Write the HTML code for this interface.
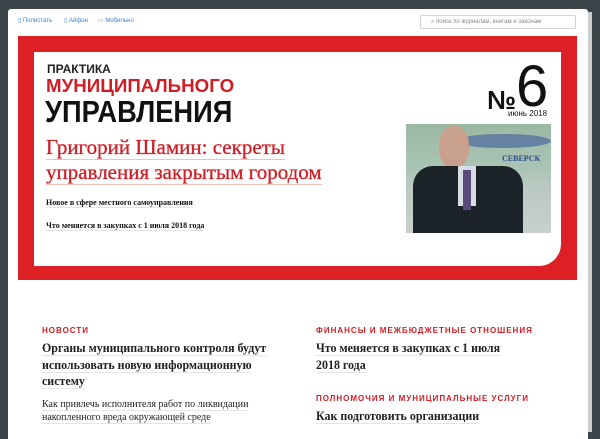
<!DOCTYPE html>
<html><head><meta charset="utf-8"><style>
*{margin:0;padding:0;box-sizing:border-box}
body{width:600px;height:427px;background:#3c454a;position:relative;overflow:hidden;font-family:"Liberation Sans",sans-serif}
.page{position:absolute;left:8px;top:9px;width:580px;height:430px;background:#fff;border-radius:3px 3px 0 0}
.edge{position:absolute;left:588px;top:12px;width:4px;height:420px;background:#c9cdd0}
.nav{position:absolute;top:17px;font-size:6px;color:#3b82d6}
.search{position:absolute;left:420px;top:15px;width:156px;height:14px;border:1px solid #cfd4d8;border-radius:2px;font-size:6px;color:#888;padding:3px 0 0 10px}
.red{position:absolute;left:18px;top:36px;width:559px;height:244px;background:#dd1f26}
.inner{position:absolute;left:34px;top:52px;width:527px;height:214px;background:#fff;border-bottom-right-radius:22px}
.t{position:absolute;white-space:nowrap}
.serif{font-family:"Liberation Serif","DejaVu Serif",serif}
.u{border-bottom:1.5px solid #e5e5e5}
.head{position:absolute;left:46px;font-family:"Liberation Serif",serif;font-size:21px;color:#d01d25;border-bottom:1.5px solid #f3c0b8;line-height:23px;white-space:nowrap;-webkit-text-stroke:0.3px #d01d25}
.sec{position:absolute;font-size:8px;letter-spacing:1px;color:#d01d25;font-weight:bold}
.art{position:absolute;font-family:"Liberation Serif",serif;font-size:13px;font-weight:bold;color:#222;line-height:16.5px;white-space:nowrap;transform:scaleX(.92);transform-origin:left top}
</style></head><body>
<div class="page"></div><div class="edge"></div>
<div class="nav" style="left:18px">▯ Полистать</div>
<div class="nav" style="left:64px">▯ Айфон</div>
<div class="nav" style="left:98px">▭ Мобильно</div>
<div class="search">⌕ поиск по журналам, книгам и законам</div>
<div class="red"></div><div class="inner"></div>
<div class="t" style="left:47px;top:62px;font-size:12px;font-weight:bold;color:#222">ПРАКТИКА</div>
<div class="t" style="left:46px;top:76px;font-size:18px;font-weight:bold;color:#d01d25;transform:scaleX(1.04);transform-origin:left">МУНИЦИПАЛЬНОГО</div>
<div class="t" style="left:45px;top:94px;font-size:31px;font-weight:bold;color:#111;transform:scaleX(.88);transform-origin:left">УПРАВЛЕНИЯ</div>
<div class="t" style="left:487px;top:85px;font-size:26px;font-weight:bold;color:#111">№</div>
<div class="t" style="left:516px;top:58px;font-size:58px;color:#111;line-height:58px">6</div>
<div class="t" style="left:508px;top:109px;font-size:8px;color:#111">июнь 2018</div>
<div style="position:absolute;left:406px;top:124px;width:145px;height:109px;overflow:hidden;background:linear-gradient(180deg,#9bb8a3 0%,#a9c4b4 40%,#b8c8c0 55%,#c8d0cc 100%)">
 <div style="position:absolute;left:50px;top:10px;width:95px;height:14px;background:#3d5a9c;border-radius:50%;opacity:.6"></div>
 <div style="position:absolute;left:96px;top:30px;font-size:8px;font-weight:bold;color:#2a4a8a;font-family:'Liberation Serif',serif">СЕВЕРСК</div>
 <div style="position:absolute;left:33px;top:2px;width:30px;height:42px;background:#c8a08c;border-radius:45%"></div>
 <div style="position:absolute;left:7px;top:42px;width:110px;height:67px;background:#1c2328;border-radius:20px 20px 0 0"></div>
 <div style="position:absolute;left:52px;top:42px;width:18px;height:40px;background:#d8dce6"></div>
 <div style="position:absolute;left:57px;top:46px;width:8px;height:40px;background:#5a4a7a"></div>
</div>
<div class="head" style="top:136px">Григорий Шамин: секреты</div>
<div class="head" style="top:161px">управления закрытым городом</div>
<div class="t serif u" style="left:46px;top:198px;font-size:8px;font-weight:bold;color:#111">Новое в сфере местного самоуправления</div>
<div class="t serif u" style="left:46px;top:221px;font-size:8px;font-weight:bold;color:#111">Что меняется в закупках с 1 июля 2018 года</div>
<div class="sec" style="left:42px;top:326px">НОВОСТИ</div>
<div class="art" style="left:42px;top:340px"><span class="u">Органы муниципального контроля будут</span><br><span class="u">использовать новую информационную</span><br><span class="u">систему</span></div>
<div class="art" style="left:42px;top:398px;font-size:10px;font-weight:normal;line-height:13px;transform:none"><span class="u">Как привлечь исполнителя работ по ликвидации</span><br><span class="u">накопленного вреда окружающей среде</span></div>
<div class="sec" style="left:316px;top:326px">ФИНАНСЫ И МЕЖБЮДЖЕТНЫЕ ОТНОШЕНИЯ</div>
<div class="art" style="left:316px;top:340px"><span class="u">Что меняется в закупках с 1 июля</span><br><span class="u">2018 года</span></div>
<div class="sec" style="left:316px;top:394px">ПОЛНОМОЧИЯ И МУНИЦИПАЛЬНЫЕ УСЛУГИ</div>
<div class="art" style="left:316px;top:408px"><span class="u">Как подготовить организации</span></div>
</body></html>
